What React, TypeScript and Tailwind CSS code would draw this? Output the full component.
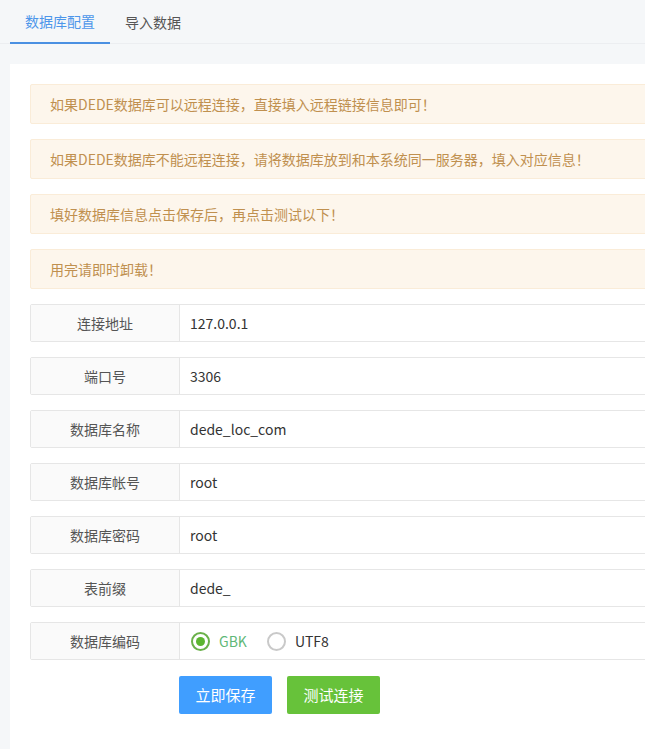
import { useState } from 'react';

const notices = [
  '如果DEDE数据库可以远程连接，直接填入远程链接信息即可！',
  '如果DEDE数据库不能远程连接，请将数据库放到和本系统同一服务器，填入对应信息！',
  '填好数据库信息点击保存后，再点击测试以下！',
  '用完请即时卸载！',
];

const fields = [
  { label: '连接地址', value: '127.0.0.1' },
  { label: '端口号', value: '3306' },
  { label: '数据库名称', value: 'dede_loc_com' },
  { label: '数据库帐号', value: 'root' },
  { label: '数据库密码', value: 'root' },
  { label: '表前缀', value: 'dede_' },
];

export default function App() {
  const [tab, setTab] = useState(0);
  const [charset, setCharset] = useState('GBK');

  return (
    <div className="min-h-[749px] w-full overflow-hidden bg-[#f5f7f9] font-['Noto_Sans_CJK_SC','Noto_Sans',sans-serif] text-[14px] text-[#333]">
      <div className="w-[760px]">
        <div className="flex h-[44px] border-b border-[#eceef1] pl-[10px]">
          {['数据库配置', '导入数据'].map((t, i) => (
            <button
              key={t}
              onClick={() => setTab(i)}
              className={
                'flex h-[44px] items-center justify-center whitespace-nowrap px-[15px] text-[14px] ' +
                (tab === i ? 'border-b-2 border-[#4a90e2] text-[#4d96ea]' : 'text-[#555]')
              }
            >
              {t}
            </button>
          ))}
        </div>

        <div className="ml-[10px] mt-[20px] bg-white px-[20px] pt-[20px] pb-[36px]">
          <div className="flex flex-col gap-[15px]">
            {notices.map((n) => (
              <div
                key={n}
                className="flex h-[40px] items-center rounded-[2px] border border-[#faecd8] bg-[#fdf6ec] px-[19px] text-[14px] text-[#c0904f]"
              >
                {n}
              </div>
            ))}
          </div>

          <div className="mt-[15px] flex flex-col gap-[15px]">
            {fields.map((f) => (
              <div key={f.label} className="flex h-[38px] rounded-[2px] border border-[#e6e6e6]">
                <div className="flex w-[149px] items-center justify-center border-r border-[#e6e6e6] bg-[#fafafa] text-[#555]">
                  {f.label}
                </div>
                <div className="flex flex-1 items-center pl-[10px] text-[#333]">{f.value}</div>
              </div>
            ))}
            <div className="flex h-[38px] rounded-[2px] border border-[#e6e6e6]">
              <div className="flex w-[149px] items-center justify-center border-r border-[#e6e6e6] bg-[#fafafa] text-[#555]">
                数据库编码
              </div>
              <div className="flex flex-1 items-center pl-[11px]">
                {['GBK', 'UTF8'].map((c) => (
                  <label
                    key={c}
                    onClick={() => setCharset(c)}
                    className="mr-[20px] flex cursor-pointer items-center"
                  >
                    <span
                      className={
                        'flex h-[19px] w-[19px] items-center justify-center rounded-full border-2 ' +
                        (charset === c ? 'border-[#6ab04a]' : 'border-[#c9c9c9]')
                      }
                    >
                      {charset === c && <span className="h-[9px] w-[9px] rounded-full bg-[#5cb531]" />}
                    </span>
                    <span className={'ml-[9px] ' + (charset === c ? 'text-[#5FB878]' : 'text-[#333]')}>{c}</span>
                  </label>
                ))}
              </div>
            </div>
          </div>

          <div className="mt-[16px] flex gap-[15px] pl-[149px]">
            <button className="h-[38px] w-[93px] rounded-[2px] bg-[#409eff] text-[15px] text-white">立即保存</button>
            <button className="h-[38px] w-[93px] rounded-[2px] bg-[#67c23a] text-[15px] text-white">测试连接</button>
          </div>
        </div>
      </div>
    </div>
  );
}
